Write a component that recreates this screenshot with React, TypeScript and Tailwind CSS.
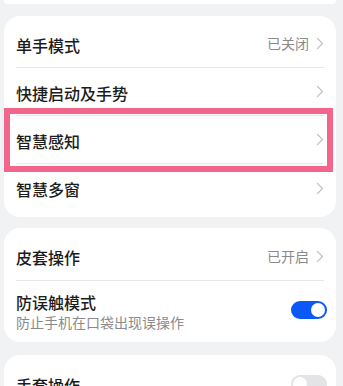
import { FC, ReactNode } from "react";

const font = { fontFamily: '"Noto Sans CJK SC", "Noto Sans", sans-serif' };

const Chevron: FC = () => (
  <svg width="8" height="13" viewBox="0 0 8 13" fill="none" className="shrink-0">
    <path d="M1.5 1.5L6.5 6.5L1.5 11.5" stroke="#c4c4c4" strokeWidth="1.3" strokeLinecap="round" strokeLinejoin="round" />
  </svg>
);

const Toggle: FC<{ on?: boolean }> = ({ on }) => (
  <div
    className={`flex h-[18px] w-[36px] items-center rounded-full px-[2px] ${
      on ? "justify-end bg-[#0a59f7]" : "justify-start bg-[#e3e4e6]"
    }`}
  >
    <div className="h-[14px] w-[14px] rounded-full bg-white" />
  </div>
);

interface RowProps {
  title: string;
  value?: string;
  divider?: boolean;
  right?: ReactNode;
}

const Row: FC<RowProps> = ({ title, value, divider, right }) => (
  <div className={`mx-[12px] flex h-[48px] items-center justify-between ${divider ? "border-b border-[#e8e8ea]" : ""}`}>
    <span className="pt-[2px] text-[16px] font-medium text-[#1c1c1c]">{title}</span>
    <div className="flex items-center gap-[7px] pr-[-1px]">
      {value && <span className="text-[14px] text-[#8a8a8a]">{value}</span>}
      {right ?? <Chevron />}
    </div>
  </div>
);

export default function App() {
  return (
    <div className="h-[386px] w-[343px] overflow-hidden bg-[#f1f2f4] pl-[4px] pr-[7px]" style={font}>
      <div className="h-[4px] rounded-b-[16px] bg-white" />

      <div className="relative mt-[12px] rounded-[16px] bg-white pt-[4px] pb-[5px]">
        <Row title="单手模式" value="已关闭" divider />
        <Row title="快捷启动及手势" divider />
        <Row title="智慧感知" divider />
        <Row title="智慧多窗" />
        <div className="absolute top-[92px] left-0 h-[64px] w-[329px] border-[6px] border-[#f2668b]" />
      </div>

      <div className="mt-[11px] rounded-[16px] bg-white pt-[4px] pb-[4px]">
        <div className="mx-[12px] flex h-[49px] items-center justify-between border-b border-[#e8e8ea]">
          <span className="pt-[2px] text-[16px] font-medium text-[#1c1c1c]">皮套操作</span>
          <div className="flex items-center gap-[7px]">
            <span className="text-[14px] text-[#8a8a8a]">已开启</span>
            <Chevron />
          </div>
        </div>
        <div className="mx-[12px] flex h-[57px] items-center justify-between pr-[-3px]">
          <div className="flex flex-col pt-[3px]">
            <span className="text-[16px] leading-[22px] font-medium text-[#1c1c1c]">防误触模式</span>
            <span className="text-[14px] leading-[18px] text-[#8a8a8a]">防止手机在口袋出现误操作</span>
          </div>
          <div className="mr-[-3px]">
            <Toggle on />
          </div>
        </div>
      </div>

      <div className="mt-[13px] rounded-[16px] bg-white pt-[4px]">
        <div className="mx-[12px] flex h-[49px] items-center justify-between">
          <span className="pt-[2px] text-[16px] font-medium text-[#1c1c1c]">手套操作</span>
          <div className="mr-[-3px]">
            <Toggle />
          </div>
        </div>
      </div>
    </div>
  );
}
